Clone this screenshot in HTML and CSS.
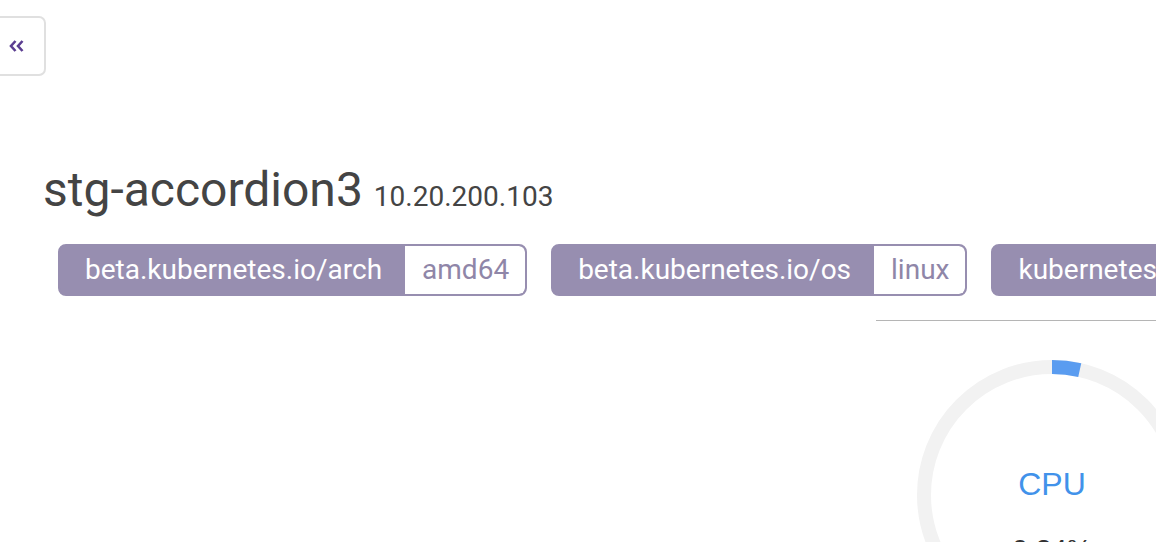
FILE: index.html
```html
<!DOCTYPE html>
<html>
<head>
<meta charset="utf-8">
<link rel="stylesheet" href="styles.css">
</head>
<body>
<button class="toggle" type="button" aria-label="Collapse"><svg class="chev" width="16" height="14" viewBox="0 0 16 14"><path d="M6.5 2 L2 7 L6.5 12 M13.5 2 L9 7 L13.5 12" fill="none" stroke="#5b3e91" stroke-width="2.6" stroke-linejoin="miter"/></svg></button>
<main class="page">
  <header class="node-head">
    <h1 class="node-name">stg-accordion3</h1>
    <span class="node-ip">10.20.200.103</span>
  </header>
  <div class="tags">
    <div class="tag"><span class="tag-key">beta.kubernetes.io/arch</span><span class="tag-val">amd64</span></div>
    <div class="tag"><span class="tag-key">beta.kubernetes.io/os</span><span class="tag-val">linux</span></div>
    <div class="tag"><span class="tag-key">kubernetes.io/hostname</span><span class="tag-val">stg-accordion3</span></div>
  </div>
  <section class="content">
    <div class="left-col"></div>
    <div class="stats">
      <div class="gauge">
        <svg class="gauge-svg" width="270" height="270" viewBox="0 0 270 270">
          <circle cx="135" cy="135" r="128" fill="none" stroke="#f2f2f2" stroke-width="14"/>
          <circle cx="135" cy="135" r="128" fill="none" stroke="#5a9cf0" stroke-width="14" stroke-dasharray="28 1000" transform="rotate(-90 135 135)"/>
        </svg>
        <div class="gauge-label">CPU</div>
        <div class="gauge-value">0.24%</div>
      </div>
    </div>
  </section>
</main>
</body>
</html>
```
FILE: styles.css
```css
html, body {
  margin: 0;
  padding: 0;
  background: #fff;
  overflow: hidden;
  width: 1156px;
  height: 542px;
}
body {
  font-family: Roboto, "Liberation Sans", sans-serif;
  color: #444;
  position: relative;
}
.toggle {
  position: absolute;
  left: -12px;
  top: 16px;
  width: 58px;
  height: 60px;
  border: 2px solid #e0e0e0;
  border-radius: 7px;
  background: #fff;
  padding: 0 0 0 19px;
  display: flex;
  align-items: center;
}
.chev {
  display: block;
  margin-top: -1px;
}
.page {
  padding: 162px 0 0 43px;
}
.node-head {
  display: flex;
  align-items: baseline;
  gap: 11px;
  height: 56px;
}
.node-name {
  margin: 0;
  font-size: 48px;
  font-weight: 400;
  color: #444;
  line-height: 56px;
}
.node-ip {
  font-size: 28px;
  color: #444;
}
.tags {
  display: flex;
  gap: 24px;
  margin: 26px 0 0 15px;
  white-space: nowrap;
}
.tag {
  display: flex;
  flex: none;
  height: 48px;
  border: 2px solid #978eb0;
  border-radius: 8px;
  background: #978eb0;
  overflow: hidden;
  font-size: 28px;
}
.tag-key {
  color: #fff;
  padding: 0 23px 0 25px;
  line-height: 48px;
}
.tag-val {
  background: #fff;
  color: #8f86a8;
  padding: 0 16px 0 17px;
  line-height: 48px;
  border-radius: 0 6px 6px 0;
}
.content {
  display: grid;
  grid-template-columns: 876px 352px;
  margin-top: 24px;
  margin-left: -43px;
}
.stats {
  border-top: 1px solid #b5b5b5;
  padding-top: 39px;
}
.gauge {
  position: relative;
  width: 270px;
  height: 270px;
  margin-left: 41px;
}
.gauge-svg {
  display: block;
}
.gauge-label {
  position: absolute;
  left: 0;
  right: 0;
  top: 106px;
  text-align: center;
  font-family: "Liberation Sans", Arial, sans-serif;
  font-size: 32px;
  color: #4192ea;
}
.gauge-value {
  position: absolute;
  left: 0;
  right: 0;
  top: 174px;
  text-align: center;
  font-family: "Liberation Sans", Arial, sans-serif;
  font-size: 28px;
  color: #333;
}
```
